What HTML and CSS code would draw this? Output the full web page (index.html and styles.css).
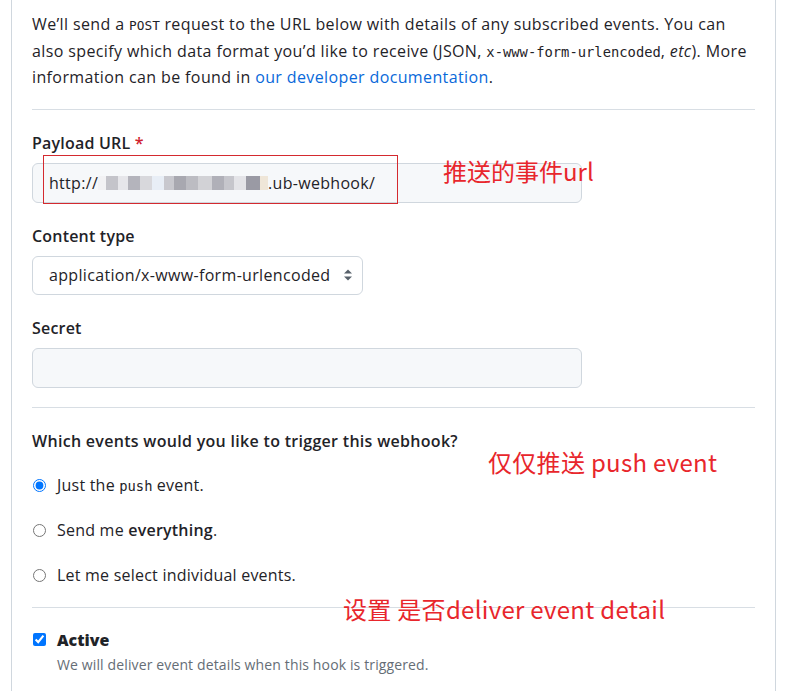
FILE: index.html
```html
<!DOCTYPE html>
<html lang="en">
<head>
<meta charset="utf-8">
<title>Webhook</title>
<link rel="stylesheet" href="styles.css">
</head>
<body>
<div class="panel">
  <p class="intro">We’ll send a <code class="caps">POST</code> request to the URL below with details of any subscribed events. You can also specify which data format you’d like to receive (JSON, <code>x-www-form-urlencoded</code>, <em>etc</em>). More information can be found in <a href="#">our developer documentation</a>.</p>
  <hr class="divider">

  <div class="field">
    <label class="label">Payload URL <span class="req">*</span></label>
    <div class="input wide">
      <span>http://</span><span class="blur"><i class="b1"></i><i class="b2"></i><i class="b3"></i><i class="b4"></i><i class="b5"></i><i class="b6"></i><i class="b7"></i><i class="b8"></i><i class="b9"></i><i class="b10"></i><i class="b11"></i><i class="b12"></i><i class="b13"></i><i class="b14"></i><i class="b16"></i></span><span>.ub-webhook/</span>
    </div>
  </div>

  <div class="field">
    <label class="label">Content type</label>
    <div class="select">
      <span>application/x-www-form-urlencoded</span>
      <svg class="arrows" width="10" height="14" viewBox="0 0 10 14"><path d="M1 5.5 L5 1.5 L9 5.5 Z M1 8.5 L5 12.5 L9 8.5 Z" fill="#57606a"/></svg>
    </div>
  </div>

  <div class="field field-last">
    <label class="label">Secret</label>
    <div class="input wide"></div>
  </div>

  <hr class="divider mid">

  <h3 class="question">Which events would you like to trigger this webhook?</h3>
  <div class="options">
    <label class="option"><input type="radio" name="ev" checked> <span>Just the <code>push</code> event.</span></label>
    <label class="option"><input type="radio" name="ev"> <span>Send me <strong>everything</strong>.</span></label>
    <label class="option"><input type="radio" name="ev"> <span>Let me select individual events.</span></label>
  </div>

  <hr class="divider last">

  <div class="active">
    <label class="check"><input type="checkbox" checked> <strong>Active</strong></label>
    <p class="note">We will deliver event details when this hook is triggered.</p>
  </div>

  <div class="mark box"></div>
  <div class="mark note1">推送的事件url</div>
  <div class="mark note2">仅仅推送 push event</div>
  <div class="mark note3">设置 是否deliver event detail</div>
</div>
</body>
</html>
```

FILE: styles.css
```css
* { box-sizing: border-box; }
html, body { margin: 0; background: #fff; }
body {
  font-family: "Open Sans", "Noto Sans", "Liberation Sans", "Noto Sans CJK SC", sans-serif;
  font-size: 16px;
  color: #1f2328;
  height: 691px;
  overflow: hidden;
}
.panel {
  position: relative;
  margin-left: 11px;
  width: 765px;
  min-height: 691px;
  border-left: 1px solid #d0d7de;
  border-right: 1px solid #d0d7de;
  padding: 11px 20px 0 20px;
}
.intro {
  margin: 0;
  line-height: 26.5px;
  letter-spacing: 0.38px;
}
.intro code {
  font-family: "DejaVu Sans Mono", "Liberation Mono", monospace;
  font-size: 13.8px;
  line-height: 1;
  letter-spacing: 0;
}
.intro .caps { font-size: 12.8px; }
a { color: #0969da; text-decoration: none; }
.divider {
  border: 0;
  border-top: 1px solid #d8dee4;
  margin: 18px 0 21px 0;
  height: 0;
}
.divider.mid { margin: 19px 0 21px 0; }
.divider.last { margin: 9px 0 20px 0; }
.field { margin-bottom: 21px; }
.field-last { margin-bottom: 0; }
.label {
  display: block;
  font-weight: 600;
  line-height: 24px;
  margin-bottom: 8px;
  letter-spacing: 0.2px;
}
.req { color: #cf222e; }
.input {
  height: 40px;
  width: 550px;
  background: #f6f8fa;
  border: 1px solid #d0d7de;
  border-radius: 6px;
  padding: 0 16px;
  display: flex;
  align-items: center;
  letter-spacing: 0.3px;
}
.blur { display: inline-flex; align-items: center; height: 14px; }
.blur i { display: inline-block; width: 12px; height: 14px; }
.blur .b1 { background: #f2f2f4; width: 8px; }
.blur .b2 { background: #c4c4ca; }
.blur .b3 { background: #e6e6ea; width: 10px; }
.blur .b4 { background: #b4b4bc; }
.blur .b5 { background: #d8d8dc; }
.blur .b6 { background: #e8eef6; }
.blur .b7 { background: #c8c8ce; width: 10px; }
.blur .b8 { background: #a8a8b0; }
.blur .b9 { background: #bcbcc2; }
.blur .b10 { background: #d2d2d6; width: 14px; }
.blur .b11 { background: #b0b0b8; }
.blur .b12 { background: #c6c6cc; width: 10px; }
.blur .b13 { background: #e4e4e8; }
.blur .b14 { background: #9a9aa4; width: 14px; }
.blur .b16 { background: #efe6d8; width: 8px; }
.select {
  height: 39px;
  width: 331px;
  border: 1px solid #d0d7de;
  border-radius: 6px;
  padding: 0 9px 0 16px;
  display: flex;
  align-items: center;
  justify-content: space-between;
  letter-spacing: 0.33px;
}
.question {
  margin: 0 0 10px 0;
  font-size: 16px;
  font-weight: 600;
  line-height: 24px;
  letter-spacing: 0.3px;
}
.options { display: flex; flex-direction: column; }
.option {
  display: flex;
  align-items: center;
  height: 45px;
  letter-spacing: 0.22px;
}
.option input {
  margin: 0 11px 0 1px;
  width: 13px;
  height: 13px;
  accent-color: #0075ff;
}
.option code {
  font-family: "DejaVu Sans Mono", "Liberation Mono", monospace;
  font-size: 13.8px;
  letter-spacing: 0;
}
.option strong { font-weight: 600; }
.check {
  display: flex;
  align-items: center;
  font-weight: 600;
  line-height: 24px;
}
.check input {
  margin: 0 11px 0 1px;
  width: 13px;
  height: 13px;
  accent-color: #0075ff;
}
.note {
  margin: 1px 0 0 25px;
  font-size: 14px;
  line-height: 24px;
  color: #656d76;
  letter-spacing: 0.13px;
}
.mark { position: absolute; color: #e8262c; font-family: "Noto Sans CJK SC", "Noto Sans", sans-serif; font-size: 24px; line-height: 30px; }
.box { left: 31px; top: 155px; width: 355px; height: 49px; border: 1px solid #d42a2f; }
.note1 { left: 431px; top: 156px; }
.note2 { left: 476px; top: 447px; letter-spacing: 0.3px; }
.note3 { left: 331px; top: 594px; letter-spacing: 0.3px; }
```
